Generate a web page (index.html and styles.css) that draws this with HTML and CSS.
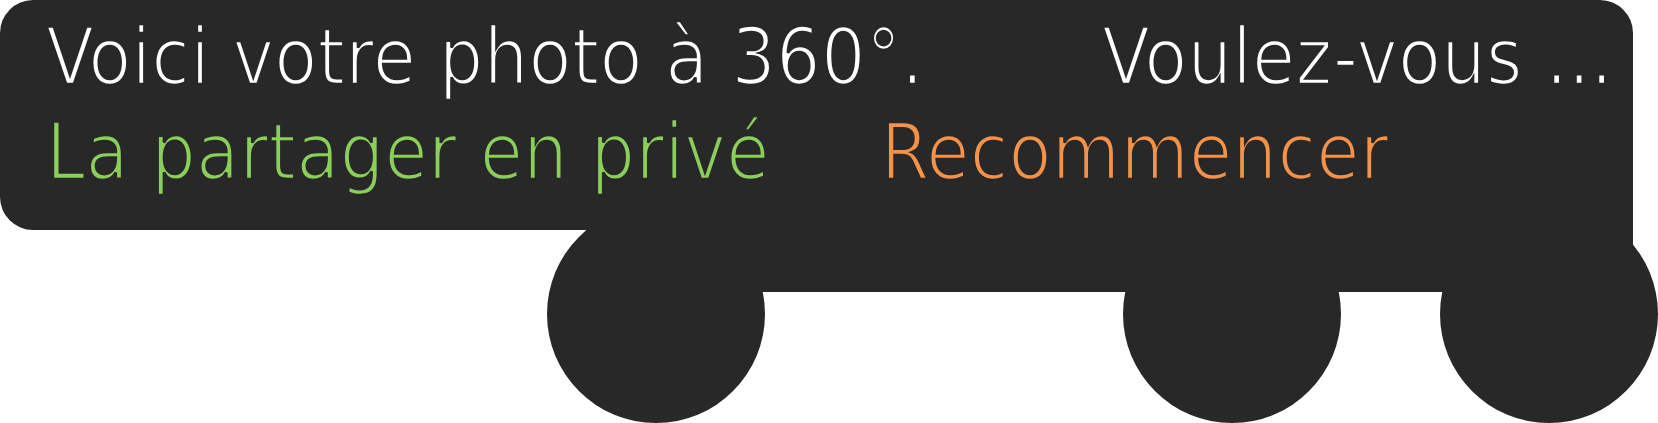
FILE: index.html
```html
<!DOCTYPE html>
<html lang="fr">
<head>
<meta charset="utf-8">
<title>Photo 360°</title>
<link rel="stylesheet" href="styles.css">
</head>
<body>
<div class="bubble">
  <div class="panel">
    <div class="line">
      <span class="msg">Voici votre photo à 360°.</span>
      <span class="msg ask">Voulez-vous ...</span>
    </div>
    <div class="line">
      <span class="action share">La partager en privé</span>
      <span class="action restart">Recommencer</span>
    </div>
  </div>
  <div class="band"></div>
  <div class="wheels">
    <div class="wheel w1"></div>
    <div class="wheel w2"></div>
    <div class="wheel w3"></div>
  </div>
</div>
</body>
</html>
```

FILE: styles.css
```css
html, body {
  margin: 0;
  padding: 0;
  background: #ffffff;
}

.bubble {
  width: 1658px;
  height: 423px;
  overflow: hidden;
}

.panel {
  box-sizing: border-box;
  width: 1633px;
  height: 230px;
  background: #282828;
  border-radius: 33px 33px 0 33px;
  padding: 10px 0 0 46px;
  font-family: "DejaVu Sans Condensed", "DejaVu Sans", sans-serif;
  font-size: 78px;
  line-height: 95px;
  letter-spacing: 0.3px;
  -webkit-text-stroke: 2.6px #282828;
}

.line {
  display: flex;
  white-space: nowrap;
}

.msg {
  color: #ffffff;
}

.ask {
  margin-left: 178px;
}

.share {
  color: #8acf5a;
}

.restart {
  color: #f5924a;
  margin-left: 111px;
}

.band {
  width: 977px;
  height: 62px;
  margin-left: 656px;
  background: #282828;
}

.wheels {
  display: flex;
  margin-top: -87px;
  padding-left: 547px;
}

.wheel {
  width: 218px;
  height: 218px;
  border-radius: 50%;
  background: #282828;
  flex: none;
}

.w2 {
  margin-left: 358px;
}

.w3 {
  margin-left: 99px;
}
```
